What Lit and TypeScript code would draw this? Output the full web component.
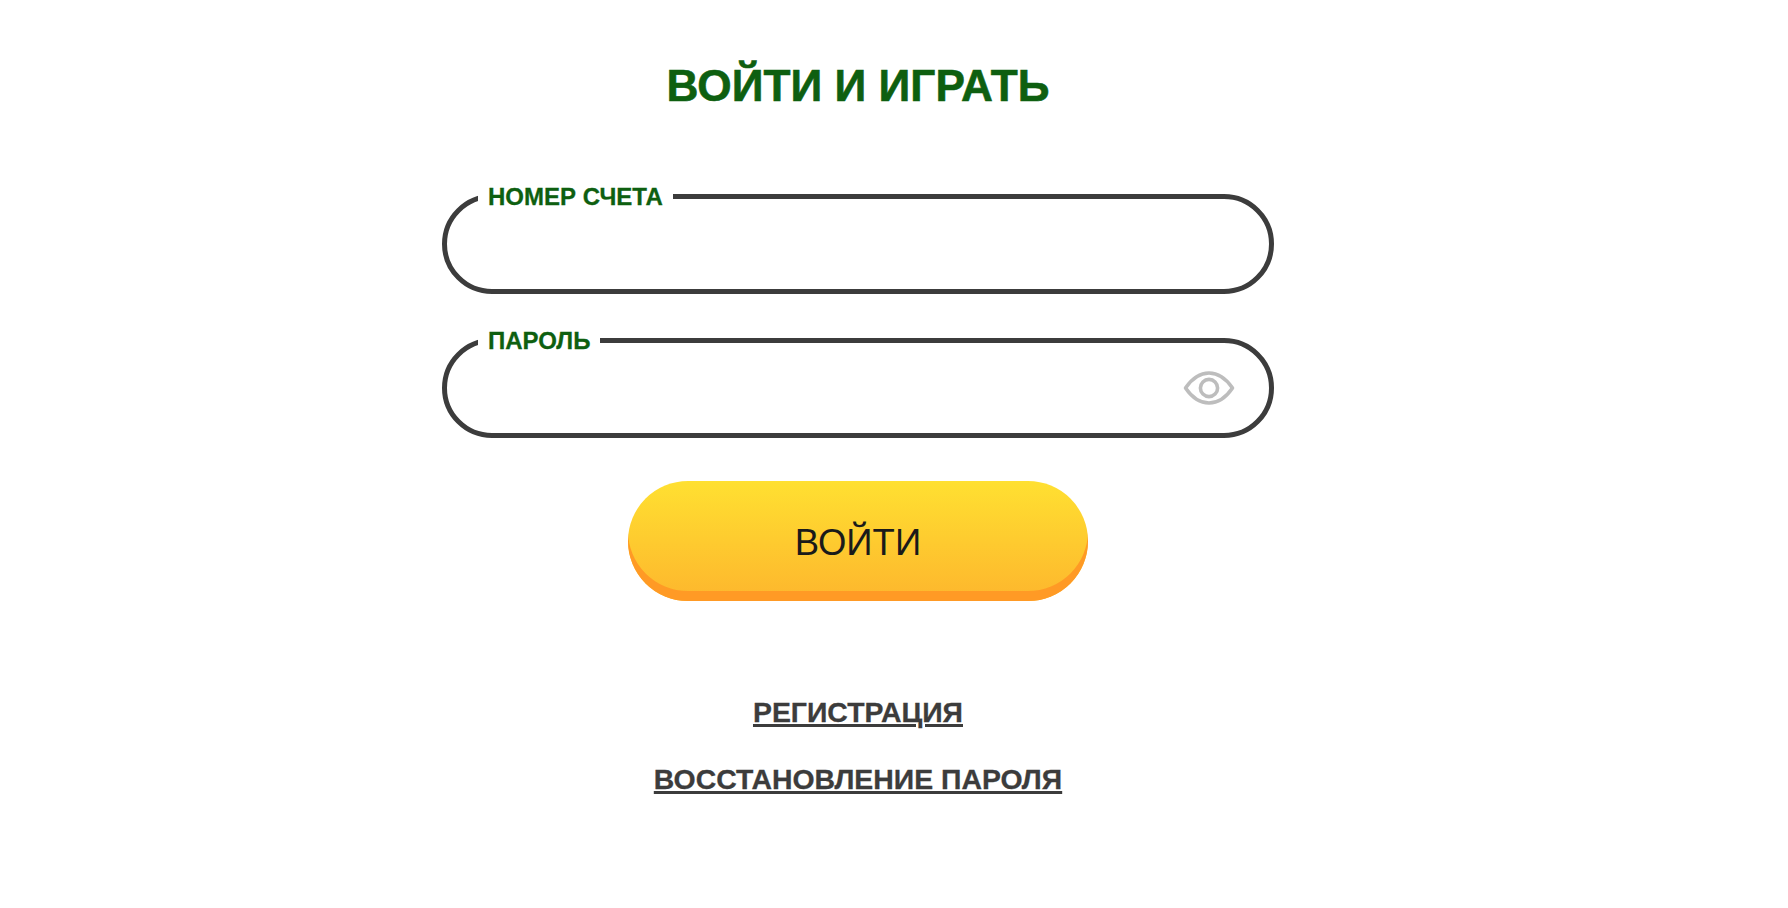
import { LitElement, html, css, svg } from "lit";
import { customElement } from "lit/decorators.js";

const eye = svg`<svg class="eye" width="52" height="34" viewBox="0 0 52 34" fill="none" stroke="#bdbdbd" stroke-width="3.6">
  <path d="M2.5 17C9 7.5 17 2 26 2S43 7.5 49.5 17C43 26.5 35 32 26 32S9 26.5 2.5 17Z" stroke-linejoin="round"/>
  <circle cx="26" cy="17" r="8.6"/>
</svg>`;

@customElement("app-root")
export class AppRoot extends LitElement {
  static styles = css`
    :host {
      display: block;
      min-height: 908px;
      background: #fff;
      font-family: "Liberation Sans", Arial, sans-serif;
    }
    .form {
      box-sizing: border-box;
      width: 832px;
      margin-left: 442px;
      padding-top: 59px;
      display: flex;
      flex-direction: column;
      align-items: center;
    }
    h1 {
      margin: 0 0 81px;
      font-size: 44.2px;
      line-height: 54px;
      font-weight: 700;
      color: #0e5f10;
      -webkit-text-stroke: 0.6px #0e5f10;
    }
    .field {
      position: relative;
      box-sizing: border-box;
      width: 100%;
      height: 100px;
      margin: 0 0 44px;
      padding: 0 34px 0 39px;
      border: 5px solid #3c3c3c;
      border-radius: 50px;
      display: flex;
      align-items: center;
      gap: 12px;
    }
    .pwd {
      margin-bottom: 43px;
    }
    label {
      position: absolute;
      left: 31px;
      top: -16px;
      padding: 0 10px;
      background: #fff;
      font-size: 24px;
      line-height: 28px;
      font-weight: 700;
      color: #0e5f10;
      -webkit-text-stroke: 0.3px #0e5f10;
    }
    input {
      flex: 1;
      min-width: 0;
      border: 0;
      outline: 0;
      padding: 0;
      background: transparent;
      font: 28px "Liberation Sans", Arial, sans-serif;
    }
    .eye {
      flex: none;
      display: block;
    }
    button {
      box-sizing: border-box;
      width: 460px;
      height: 120px;
      margin: 0;
      padding: 3px 0 0;
      border: 0;
      border-radius: 60px;
      background: linear-gradient(180deg, #ffe031 0%, #fdb62d 100%);
      box-shadow: inset 0 -10px 0 #ff9a25;
      font: 36.5px/44px "Liberation Sans", Arial, sans-serif;
      color: #1a1a1a;
    }
    .links {
      margin-top: 95px;
      display: flex;
      flex-direction: column;
      align-items: center;
      gap: 35px;
    }
    a {
      font-size: 28.4px;
      line-height: 32px;
      font-weight: 700;
      color: #3c3c3c;
      text-decoration: underline;
      text-decoration-thickness: 3px;
      -webkit-text-stroke: 0.3px #3c3c3c;
    }
  `;

  render() {
    return html`<main class="form">
      <h1>ВОЙТИ И ИГРАТЬ</h1>
      <div class="field">
        <label for="acc">НОМЕР СЧЕТА</label>
        <input id="acc" type="text" />
      </div>
      <div class="field pwd">
        <label for="pwd">ПАРОЛЬ</label>
        <input id="pwd" type="password" />${eye}
      </div>
      <button type="button">ВОЙТИ</button>
      <nav class="links">
        <a href="#">РЕГИСТРАЦИЯ</a>
        <a href="#">ВОССТАНОВЛЕНИЕ ПАРОЛЯ</a>
      </nav>
    </main>`;
  }
}
